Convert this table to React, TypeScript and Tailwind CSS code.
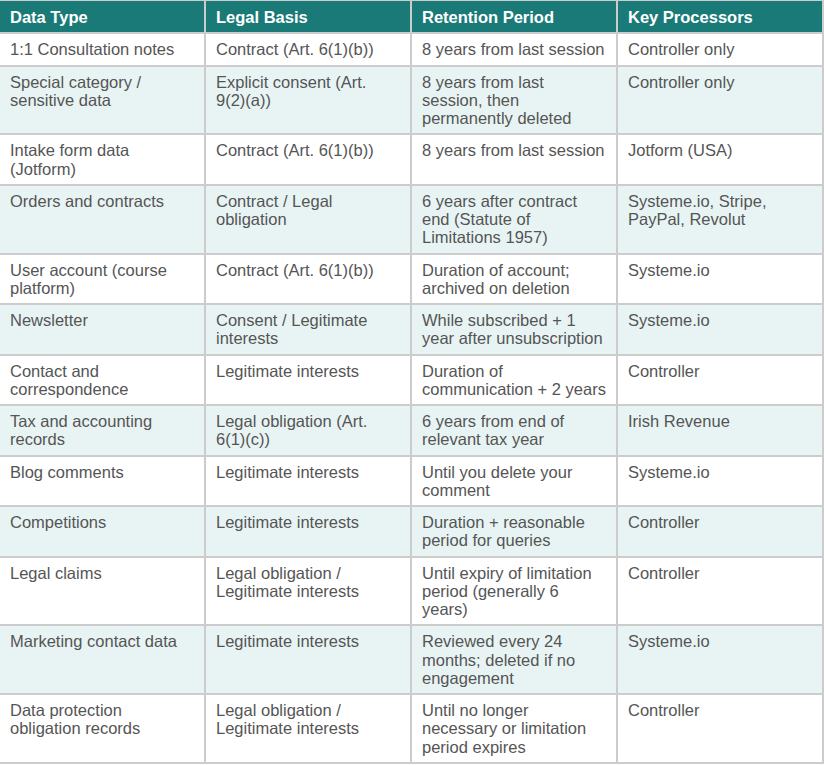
const rows: [string, string, string, string][] = [
  ["1:1 Consultation notes", "Contract (Art. 6(1)(b))", "8 years from last session", "Controller only"],
  ["Special category / sensitive data", "Explicit consent (Art. 9(2)(a))", "8 years from last session, then permanently deleted", "Controller only"],
  ["Intake form data (Jotform)", "Contract (Art. 6(1)(b))", "8 years from last session", "Jotform (USA)"],
  ["Orders and contracts", "Contract / Legal obligation", "6 years after contract end (Statute of Limitations 1957)", "Systeme.io, Stripe, PayPal, Revolut"],
  ["User account (course platform)", "Contract (Art. 6(1)(b))", "Duration of account; archived on deletion", "Systeme.io"],
  ["Newsletter", "Consent / Legitimate interests", "While subscribed + 1 year after unsubscription", "Systeme.io"],
  ["Contact and correspondence", "Legitimate interests", "Duration of communication + 2 years", "Controller"],
  ["Tax and accounting records", "Legal obligation (Art. 6(1)(c))", "6 years from end of relevant tax year", "Irish Revenue"],
  ["Blog comments", "Legitimate interests", "Until you delete your comment", "Systeme.io"],
  ["Competitions", "Legitimate interests", "Duration + reasonable period for queries", "Controller"],
  ["Legal claims", "Legal obligation / Legitimate interests", "Until expiry of limitation period (generally 6 years)", "Controller"],
  ["Marketing contact data", "Legitimate interests", "Reviewed every 24 months; deleted if no engagement", "Systeme.io"],
  ["Data protection obligation records", "Legal obligation / Legitimate interests", "Until no longer necessary or limitation period expires", "Controller"],
];

const headers = ["Data Type", "Legal Basis", "Retention Period", "Key Processors"];

export default function App() {
  return (
    <div className="min-h-screen bg-white overflow-hidden font-['Liberation_Sans',Arial,sans-serif]">
      <table className="table-fixed border-collapse w-[826px] -ml-[2px] -mt-px text-[16.5px] leading-[18.25px]">
        <thead>
          <tr className="bg-[#1a7a78]">
            {headers.map((h) => (
              <th
                key={h}
                className="border-2 border-[#ccc] px-2.5 py-[6.5px] text-left font-bold text-white"
              >
                {h}
              </th>
            ))}
          </tr>
        </thead>
        <tbody>
          {rows.map((r, i) => (
            <tr key={r[0]} className={i % 2 === 1 ? "bg-[#e8f4f4]" : "bg-white"}>
              {r.map((c, j) => (
                <td
                  key={j}
                  className="border-2 border-[#ccc] px-2.5 py-1.5 align-top text-left text-[#555]"
                >
                  {c}
                </td>
              ))}
            </tr>
          ))}
        </tbody>
      </table>
    </div>
  );
}
